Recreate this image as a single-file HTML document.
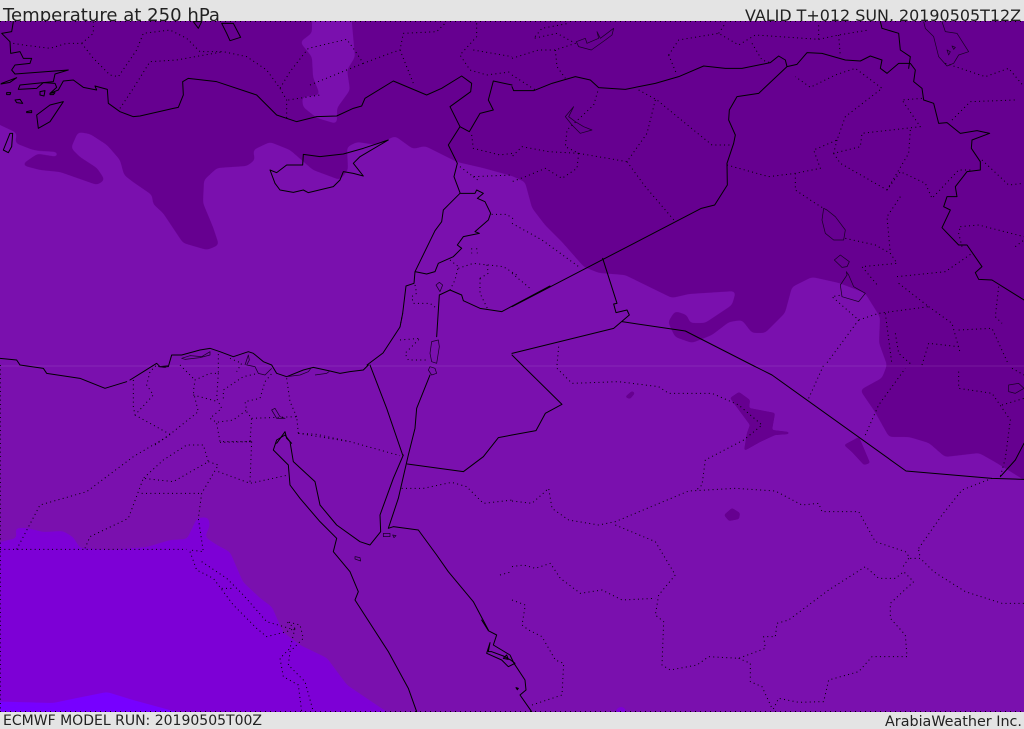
<!DOCTYPE html>
<html><head><meta charset="utf-8"><title>Temperature at 250 hPa</title>
<style>
html,body{margin:0;padding:0;background:#e4e4e4;overflow:hidden}
svg{display:block}
text{font-family:"DejaVu Sans","Liberation Sans",sans-serif;fill:#222}
.s{fill:none;stroke:#000;stroke-width:3;stroke-linejoin:round;stroke-linecap:round}
.t{fill:none;stroke:#1a0028;stroke-width:2.2;stroke-linejoin:round}
.d{fill:none;stroke:#000;stroke-width:3;stroke-dasharray:3 10;stroke-linejoin:round}
</style></head><body>
<svg width="1024" height="729" viewBox="0 0 1024 729" xmlns="http://www.w3.org/2000/svg">
<defs>
<filter id="sm" filterUnits="userSpaceOnUse" x="-40" y="-40" width="1120" height="820" color-interpolation-filters="sRGB"><feGaussianBlur stdDeviation="2.5"/><feComponentTransfer><feFuncA type="linear" slope="10" intercept="-4.5"/></feComponentTransfer></filter>
<filter id="sb" filterUnits="userSpaceOnUse" x="-40" y="-40" width="1120" height="820" color-interpolation-filters="sRGB"><feGaussianBlur stdDeviation="1.1"/><feComponentTransfer><feFuncA type="linear" slope="8" intercept="-3.2"/></feComponentTransfer></filter>
<clipPath id="mp"><rect x="0" y="21" width="1024" height="691"/></clipPath>
</defs>
<rect width="1024" height="729" fill="#e4e4e4"/>
<text x="3" y="21" font-size="18" textLength="217" lengthAdjust="spacingAndGlyphs">Temperature at 250 hPa</text>
<text x="745" y="21" font-size="16" textLength="276" lengthAdjust="spacingAndGlyphs">VALID T+012 SUN, 20190505T12Z</text>
<text x="3" y="725" font-size="14" textLength="259" lengthAdjust="spacingAndGlyphs">ECMWF MODEL RUN: 20190505T00Z</text>
<text x="885" y="726" font-size="14" textLength="137" lengthAdjust="spacingAndGlyphs">ArabiaWeather Inc.</text>
<g clip-path="url(#mp)">
<rect x="0" y="21" width="1024" height="691" fill="#7a10ae"/>
<path filter="url(#sm)" fill="#660090" d="M-20,115 0,125 17,133 15,143 33,150 58,152 58,157 37,154 21,165 40,170 60,172 97,185 105,180 97,168 80,157 71,148 78,132 90,134 107,145 120,160 124,175 133,182 152,195 153,204 163,213 183,243 207,250 219,245 213,227 203,203 204,180 217,168 247,166 255,160 253,150 270,142 290,150 313,170 340,180 348,170 347,147 357,142 377,145 395,136 413,149 425,146 457,162 483,168 512,176 525,182 532,208 545,225 562,242 584,267 599,273 625,275 672,298 689,294 736,291 732,305 705,323 690,323 687,315 675,311 668,322 675,337 692,343 712,335 729,322 742,320 752,333 765,333 785,313 792,287 812,277 839,283 865,293 880,317 879,343 887,365 882,378 860,390 875,412 889,437 909,437 929,443 945,457 979,453 995,462 1024,480 1060,500 1060,-20 -20,-20Z"/>
<path filter="url(#sm)" fill="#7a10ae" d="M312,-20 312,33 300,42 312,57 313,77 320,95 302,97 303,107 317,118 337,124 337,108 350,90 347,70 355,57 348,-20Z"/>
<path filter="url(#sb)" fill="#660090" d="M730,398 739,392 750,400 749,408 775,413 772,430 789,432 789,434 775,435 760,442 744,451 747,433 750,425ZM844,445 859,437 870,463 864,465 852,452ZM724,515 732,508 740,513 739,519 729,521ZM625,397 632,391 635,393 630,399Z"/>
<path filter="url(#sm)" fill="#7d00d6" d="M-20,546 0,542 17,538 15,528 27,528 43,532 63,531 73,537 80,548 110,550 147,547 170,540 187,539 197,518 208,517 210,525 205,537 217,545 230,552 243,582 260,598 272,607 283,632 300,645 327,658 347,685 387,712 420,735 -20,735Z"/>
<path filter="url(#sm)" fill="#7700ff" d="M-20,701 53,703 77,698 107,692 133,700 177,712 200,725 -20,725Z"/>
<circle cx="621" cy="712" r="5" fill="#7d00d6"/>
<rect x="0" y="365.5" width="1024" height="1" fill="#fff" opacity=".1"/>

<!-- north-west quadrant -->
<g transform="scale(.33333)">
<path class="s" d="M40,65 35,95 5,100 30,125 32,160 60,155 70,175 95,175 90,190 45,195 35,210 45,222 205,210 165,222 160,245 60,255 55,268 110,265 130,248 165,250 170,262 150,280 175,270 190,243 220,240 250,262 290,270 285,258 322,268 325,310 360,335 400,350 420,348 520,325 535,322 550,285 548,245 565,235 650,245 770,285 830,345 890,365 950,350 1010,348 1060,325 1085,318 1095,295 1180,243 1280,285 1325,265 1385,228 1415,250 1412,275 1350,320 1380,380 1345,435 1372,490 1362,530 1380,578"/>
<path class="s" d="M1380,380 1408,395 1440,340 1480,330 1465,300 1480,243 1536,255"/>
<path class="s" d="M810,510 825,550 840,570 880,577 910,570 925,578 1000,560 1020,540 1030,515 1060,520 1090,528 1060,490 1080,470 1165,420 1090,445 1030,462 960,470 910,463 908,495 860,495 830,518Z"/>
<path class="s" d="M190,305 150,315 110,345 115,385 150,365ZM10,450 30,400 38,400 35,440 25,458ZM5,250 50,233 30,247 3,252ZM20,278 32,278 30,284 20,284ZM45,300 60,298 68,310 50,308ZM80,335 95,332 95,338 80,338ZM120,275 135,272 132,288 120,285ZM150,280 165,278 160,284 150,284ZM665,70 700,70 722,112 690,122 680,100ZM580,65 605,65 595,85Z"/>
<path class="s" d="M0,1075 50,1080 60,1095"/>
<path class="d" d="M40,130 70,135 150,145 200,130 245,130 280,175 330,225 355,230 410,150 430,100 510,90 560,115 600,155 670,155 740,170 800,210 840,265 870,215 925,145 1040,118 1060,145 1090,190 1170,160 1200,150 1210,100 1310,95 1340,65M360,325 400,265 425,225 450,185 530,180 670,155M280,65 280,100 245,130M840,265 860,300 860,360M865,300 960,285M930,255 1040,210 1090,190M1200,150 1240,250M1430,70 1430,110 1380,165 1410,210 1460,225 1536,215M1420,150 1536,170M1415,405 1420,445 1500,465 1536,460M1380,500 1420,530 1536,525M1420,530 1440,545"/>
</g>

<!-- Levant detail -->
<g transform="translate(400,180) scale(.33333)">
<path class="s" d="M180,40 225,40 230,30 250,40 232,55 255,65 272,100 265,120 225,155 238,160 190,170 172,195 185,205 160,230 115,250 105,275 80,282 45,275 42,310 18,318 8,400 0,441 -51,519 -99,555M180,40 150,70 130,90 125,125 105,152 45,275M118,345 150,330 185,345 190,362 240,385 305,395 450,318M118,345 110,470"/>
<path class="t" d="M108,315 118,307 128,315 120,335ZM95,485 115,480 118,500 110,550 95,545 90,520ZM90,560 105,565 110,580 95,585 85,570Z"/>
<path class="d" d="M275,103 320,103 345,120M215,205 215,220M230,205 232,220M150,240 175,260 165,300 150,330M175,265 220,250 310,260 350,285M240,295 240,340 262,385M240,295 265,280 260,250M45,315 50,340 35,350 40,370 90,370 110,385M8,400 0,440M0,480 60,475 15,520 25,540 85,540"/>
</g>

<!-- north-east quadrant -->
<g transform="translate(512,0) scale(.33333)">
<path class="s" d="M0,260 5,272 65,272 120,250 190,230 235,240 260,263 340,268 430,250 500,230 575,198 640,205 690,205 775,188 800,168 820,180 825,200 855,193 885,158 930,160 1000,180 1045,183 1075,168 1110,180 1105,205 1125,220 1160,190 1195,190 1210,210 1205,245 1230,265 1235,300 1265,310 1280,370 1305,368 1345,400 1395,392 1433,400 1380,420 1378,445 1405,485 1405,510 1365,515 1330,560 1335,590 1305,590 1295,620 1315,630 1290,683 1340,735 1365,735 1410,800 1390,818 1400,838 1440,840 1536,900"/>
<path class="s" d="M825,200 740,280 675,290 652,330 650,360 670,405 665,430 645,490 646,555 608,615 568,625 0,920M272,775 315,910 305,912 312,938 345,930 352,945 305,985 0,1060M330,965 520,993 720,1095M0,1065 30,1095M1105,65 1110,85 1160,100 1165,150 1195,170 1190,205"/>
<path class="t" d="M1235,65 1240,85 1265,110 1280,170 1305,198 1325,190 1340,165 1370,155 1335,100 1300,95 1290,65M1305,150 1315,155 1310,165ZM1320,138 1330,142 1325,148ZM193,125 220,115 225,130 260,115 255,95 265,115 305,85 300,105 280,120 238,150 200,140ZM185,320 160,350 180,375 205,400 240,390 215,380 190,365 170,350ZM935,625 930,660 940,700 965,720 995,720 1000,690 970,650 945,630ZM967,780 985,765 1012,785 1005,800 990,802ZM1003,815 1005,825 985,855 990,890 1040,905 1060,880 1025,860 1010,825Z"/>
<path class="d" d="M0,175 80,150 130,150 190,130 135,100 65,115 90,85 170,70M130,150 135,200 160,235M470,165 495,225M470,165 500,120 620,100 680,135 730,105 920,118 980,105 1070,90M620,100 640,70M920,118 920,70M980,105 985,170M720,130 750,180 775,188M0,225 70,270M380,270 435,300 520,370 600,435 660,435M430,300 405,400 345,485 200,460 160,440 165,390 245,315 260,265M345,485 400,560 490,665M200,460 195,505 150,535 100,505 40,530 0,545M200,460 110,455 30,440 0,470M645,495 770,530 850,520 925,505 905,450 975,420 1000,350 1110,265 1030,205 970,225 895,262 850,230M850,520 850,570 910,610 935,625M975,420 965,460 1045,440 1050,400 1225,380 1170,300 1230,295M965,460 985,490 1125,570 1165,515 1240,550 1260,595 1340,510 1375,510M1195,390 1190,460 1125,570M1165,590 1125,650 1135,760 1155,790 1050,800 1100,860M1000,715 1090,735 1135,760M1155,830 1300,815 1380,760M1320,360 1375,305 1510,300M1410,480 1490,555 1536,550M1345,680 1400,675 1536,710M1160,850 1250,920 1100,940 1040,960 960,890 990,885M1250,920 1320,970 1345,1060M1040,960 940,1095M1120,940 1140,1095M1150,1000 1160,1060 1200,1095M1230,1095 1250,1030 1340,1040M1340,990 1440,985 1490,1095M1460,860 1450,950 1470,970M1350,740 1340,700 1345,680M1510,740 1536,720M0,670 90,720 200,800M0,820 60,870M140,1040 135,1095M1300,190 1420,230 1490,205 1536,260"/>
</g>

<!-- Nile delta detail -->
<g transform="translate(130,335) scale(.33333)">
<path class="s" d="M0,135 40,110 80,85 90,95 115,95 125,60 155,60 210,45 240,40 270,50 310,65 355,50 370,55 400,80 425,90 440,115 470,125 520,105 550,97 600,108 630,115 660,110 700,105 715,90"/>
<path class="t" d="M155,70 180,62 215,65 240,50 240,60 210,68 165,73ZM345,90 355,60 358,75 350,90 375,95 385,115 405,120 425,100M470,125 510,120 535,110 545,97M555,120 590,115 600,108M85,95 115,92 105,98ZM425,225 435,220 450,245 465,250 440,250Z"/>
<path class="s" d="M440,325 465,290 470,310 485,325"/>
<path class="d" d="M10,135 10,215 15,240 70,180 50,150 60,110 80,90M15,240 120,298 205,230 190,170 195,135 240,115 265,115 265,55M150,90 190,130M120,298 75,330M265,115 260,190 275,220 240,250 260,262 310,255 350,225 345,200 390,190 405,140 430,110M190,180 265,200M280,190 280,165 340,125 385,115M300,70 335,85 320,110M260,265 270,320 365,320M350,230 365,250 360,320M365,250 500,245 505,295M470,130 480,200 500,245M505,295 660,320"/>
</g>

<!-- south-west quadrant -->
<g transform="translate(0,365) scale(.33333)">
<path class="s" d="M60,0 130,10 140,25 240,40 315,70 380,50M1110,0 1160,130 1208,270M1290,30 1250,130 1245,190 1225,270 1195,400 1165,490 1180,485 1255,495 1310,570 1345,620 1420,710 1465,795M1210,270 1180,340 1140,450 1142,500 1110,540 1080,530 1010,480 960,420 945,350 880,290 870,230 855,210 830,225 820,255 865,300 870,360 900,400 960,470 1010,520 1000,560 1050,620 1075,680 1065,705 1165,860 1225,970 1250,1040M1222,297 1390,320 1450,275 1495,218 1536,210"/>
<path class="t" d="M1150,505 1170,505 1170,515 1150,515ZM1178,510 1188,512 1182,518ZM1065,575 1080,578 1082,588 1065,582Z"/>
<path class="d" d="M1,0 1,1040M0,553 560,553M50,553 120,420 260,380 400,275 510,210M755,230 750,350M660,232 755,230M895,205 950,208 1050,230 1200,272M255,550 270,515 385,460 430,340 520,350 625,290 610,240 560,240 490,285 430,340M625,290 655,300 605,385 595,460 610,560 570,555M425,385 605,385M655,320 750,355 865,330M570,560 590,615 640,640 700,720 770,790 800,815 860,800 885,790 870,850 840,880 850,935 895,960 905,1040M605,590 680,640 730,690 800,770 885,795M665,670 700,670M885,790 860,770 900,780 910,820 870,860 865,900 915,950 940,1040M1205,370 1270,370 1355,352 1400,365 1450,415 1536,405M1500,630 1536,620"/>
</g>

<!-- Farasan / Red Sea detail -->
<g transform="translate(440,620) scale(.33333)">
<path class="s" d="M125,0 145,32 170,45 160,75 185,90 210,105 222,130 255,180 258,210 240,225 275,275"/>
<path class="s" d="M150,68 140,100 185,120 205,140 225,130 212,120 190,108 155,95 145,95ZM190,115 200,105 205,118ZM228,203 235,205 232,209Z"/>
</g>

<!-- south-east quadrant -->
<g transform="translate(512,365) scale(.33333)">
<path class="s" d="M30,0 150,118 100,145 72,197 0,210M720,0 780,30 1182,318 1440,340 1536,343M1465,335 1510,285 1536,235"/>
<path class="t" d="M1490,60 1520,55 1536,70 1510,85 1490,80Z"/>
<path class="d" d="M135,10 180,55 320,50 440,65 470,85 600,85 680,120 750,180 695,225 580,285 570,360 550,378M0,408 60,415 110,370 120,430 170,465 260,480 310,470 530,378 670,370 790,378 870,420 920,415 930,440 1040,440 1090,530 1180,560 1195,580 1225,580 1265,620 1360,680 1470,715 1536,715M310,480 430,530 490,630 440,690 430,750 455,770 450,900 475,915 555,900 590,875 680,880 760,850 755,815 790,815 795,775 830,765 950,675 1060,605 1100,640 1150,640 1175,620 1205,650 1135,715 1135,760 1180,810 1185,875 1080,875 1040,920 950,945 935,1010 860,1012 800,1000 780,1040M680,880 715,895 715,950 750,965 780,1030M0,605 35,600 70,610 115,595 145,640 205,685 270,675 330,705 430,700M0,705 40,720 30,780 50,795 90,815 130,885 155,895 150,990 90,1010 60,1020M1190,580 1170,610M1220,550 1290,450 1350,375 1440,340M1220,555 1225,580M890,100 935,0M1060,210 1100,120 1180,10M1340,20 1340,70 1440,85 1495,165 1480,280 1465,335M1470,120 1536,100M1500,10 1536,30"/>
</g>
<path d="M0,21.5H1024M0,711.5H1024" stroke="#000" stroke-width="1" stroke-dasharray="1 4" fill="none"/>
</g>
</svg>
</body></html>
